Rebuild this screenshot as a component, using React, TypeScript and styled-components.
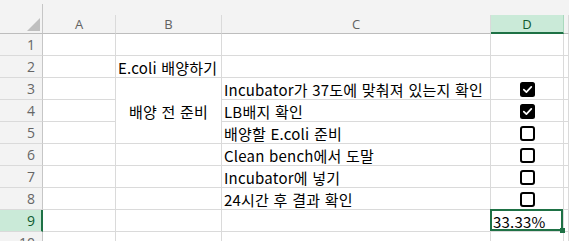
import React from 'react';
import styled, { createGlobalStyle, css } from 'styled-components';

const GlobalStyle = createGlobalStyle`
  html, body {
    margin: 0;
    padding: 0;
    background: #fff;
    overflow: hidden;
  }
`;

const cols = '43px 73px 106px 269px 73px 1fr';
const green = '#1e7145';
const grid = '#dadada';

const Sheet = styled.div`
  width: 569px;
  height: 241px;
  overflow: hidden;
  background: #fff;
  font-family: 'Noto Sans CJK KR', 'Noto Sans', sans-serif;
`;

const HeaderRow = styled.div`
  display: grid;
  grid-template-columns: ${cols};
  height: 34px;
  background: #f3f3f3;
`;

const Corner = styled.div`
  display: flex;
  align-items: flex-end;
  justify-content: flex-end;
  margin-top: 4px;
  padding: 0 2px 2px 0;
  border-right: 1px solid #c6c6c6;
  border-bottom: 1px solid #bdbdbd;
`;

const Triangle = styled.div`
  width: 0;
  height: 0;
  border-left: 13px solid transparent;
  border-bottom: 13px solid #bfbfbf;
`;

const ColHead = styled.div<{ $active?: boolean }>`
  align-self: end;
  height: 18px;
  display: flex;
  align-items: center;
  justify-content: center;
  border-right: 1px solid ${grid};
  border-bottom: 1px solid #bdbdbd;
  font-family: 'Open Sans', sans-serif;
  font-size: 13px;
  color: #616161;
  ${p => p.$active && css`
    height: 17px;
    background: #caead8;
    border-bottom: 2px solid ${green};
    border-right-color: #a9d9bd;
    color: #0e5a2f;
  `}
`;

const Body = styled.div`
  display: grid;
  grid-template-columns: ${cols};
  grid-auto-rows: 22px;
`;

const RowHead = styled.div<{ $active?: boolean }>`
  display: flex;
  align-items: center;
  justify-content: flex-end;
  padding-right: 7px;
  background: #f3f3f3;
  border-right: 1px solid #c6c6c6;
  border-bottom: 1px solid ${grid};
  font-family: 'Open Sans', sans-serif;
  font-size: 14px;
  color: #666;
  ${p => p.$active && css`
    background: #caead8;
    border-right: 2px solid ${green};
    padding-right: 6px;
    color: #0e5a2f;
  `}
`;

const Cell = styled.div<{ $span?: number; $align?: 'left' | 'center' }>`
  position: relative;
  display: flex;
  align-items: center;
  justify-content: ${p => (p.$align === 'center' ? 'center' : 'flex-start')};
  padding: 1px 2px 0;
  border-right: 1px solid ${grid};
  border-bottom: 1px solid ${grid};
  font-size: 15px;
  letter-spacing: 0.2px;
  word-spacing: 1px;
  color: #000;
  white-space: nowrap;
  ${p => p.$span && css`grid-row: span ${p.$span};`}
`;

const Selected = styled(Cell)`
  &::after {
    content: '';
    position: absolute;
    left: -1px;
    top: -1px;
    right: 0;
    bottom: 0;
    border: 2px solid ${green};
  }
  &::before {
    content: '';
    position: absolute;
    right: -2px;
    bottom: -2px;
    width: 5px;
    height: 5px;
    background: ${green};
    z-index: 1;
  }
`;

const Check = ({ on }: { on: boolean }) => (
  <svg width="15" height="15" viewBox="0 0 15 15">
    {on ? (
      <>
        <rect x="0" y="0" width="15" height="15" rx="2.5" fill="#000" />
        <path d="M3.8 7.6 L6.4 10.1 L11.3 4.9" stroke="#fff" strokeWidth="1.7" fill="none" strokeLinecap="round" strokeLinejoin="round" />
      </>
    ) : (
      <rect x="1" y="1" width="13" height="13" rx="2" fill="#fff" stroke="#000" strokeWidth="2" />
    )}
  </svg>
);

const tasks = [
  { text: 'Incubator가 37도에 맞춰져 있는지 확인', done: true },
  { text: 'LB배지 확인', done: true },
  { text: '배양할 E.coli 준비', done: false },
  { text: 'Clean bench에서 도말', done: false },
  { text: 'Incubator에 넣기', done: false },
  { text: '24시간 후 결과 확인', done: false },
];

export default function App() {
  const done = tasks.filter(t => t.done).length;
  const pct = ((done / tasks.length) * 100).toFixed(2) + '%';

  return (
    <Sheet>
      <GlobalStyle />
      <HeaderRow>
        <Corner><Triangle /></Corner>
        <ColHead>A</ColHead>
        <ColHead>B</ColHead>
        <ColHead>C</ColHead>
        <ColHead $active>D</ColHead>
        <ColHead />
      </HeaderRow>
      <Body>
        <RowHead>1</RowHead>
        <Cell /><Cell /><Cell /><Cell /><Cell />

        <RowHead>2</RowHead>
        <Cell /><Cell>E.coli 배양하기</Cell><Cell /><Cell /><Cell />

        {tasks.map((t, i) => (
          <React.Fragment key={i}>
            <RowHead>{i + 3}</RowHead>
            <Cell />
            {i === 0 && <Cell $span={3} $align="center">배양 전 준비</Cell>}
            {i > 2 && <Cell />}
            <Cell>{t.text}</Cell>
            <Cell $align="center"><Check on={t.done} /></Cell>
            <Cell />
          </React.Fragment>
        ))}

        <RowHead $active>9</RowHead>
        <Cell /><Cell /><Cell />
        <Selected>{pct}</Selected>
        <Cell />

        <RowHead>10</RowHead>
        <Cell /><Cell /><Cell /><Cell /><Cell />
      </Body>
    </Sheet>
  );
}
